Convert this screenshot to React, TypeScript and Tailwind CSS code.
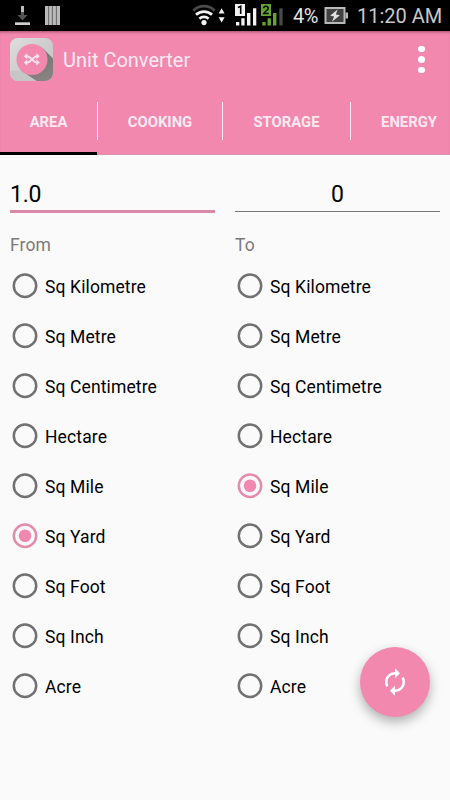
import React, { useState } from "react";
import { MdAutorenew } from "react-icons/md";

interface UnitColumnProps {
  label: string;
  selected: string;
  setSelected: (unit: string) => void;
}

const tabs = [
  { name: "AREA", className: "w-[97px]" },
  { name: "COOKING", className: "w-[125px]" },
  { name: "STORAGE", className: "w-[128px]" },
  { name: "ENERGY", className: "w-[117px]" },
];

const units = [
  "Sq Kilometre",
  "Sq Metre",
  "Sq Centimetre",
  "Hectare",
  "Sq Mile",
  "Sq Yard",
  "Sq Foot",
  "Sq Inch",
  "Acre",
];

function StatusBar() {
  return (
    <div className="flex h-[31px] bg-black text-[20px] leading-[32px] text-[#c8c8c8]">
      <svg width="285" height="31" viewBox="0 0 285 31" className="shrink-0">
        {/* download */}
        <path d="M21 6h3v6h-3z" fill="#bdbdbd" />
        <path d="M21 12h3v3h3.5l-5 5.5-5-5.5H21z" fill="#555" />
        <path d="M15 22.3h15v2.7H15z" fill="#cfcfcf" />
        {/* bars */}
        <path d="M45 6h15v19H45z" fill="#b9b9b9" />
        <path d="M48.6 6v19M52.4 6v19M56.4 6v19" stroke="#5e5e5e" strokeWidth="0.9" />
        {/* wifi */}
        <g fill="none" stroke="#f2f2f2" strokeWidth="2.7">
          <path d="M193.3 10.6a15 15 0 0 1 21.4 0" stroke="#4a4a4a" />
          <path d="M196 14.8a11.5 11.5 0 0 1 16 0" />
          <path d="M199.4 18.8a6.7 6.7 0 0 1 9.2 0" />
        </g>
        <circle cx="204" cy="22.6" r="2.6" fill="#f2f2f2" />
        <path d="M218.6 13.5l3-5.2 3 5.2zM218.6 17.3l3 5.2 3-5.2z" fill="#f2f2f2" />
        {/* sim 1 */}
        <path d="M235 4h10v12h-10z" fill="#f2f2f2" />
        <path d="M238 7.5l2.7-1.2V14" fill="none" stroke="#000" strokeWidth="1.6" />
        <path
          d="M236 22h3.3v3.5H236zM241.3 18.3h3.3v7.2h-3.3zM247 13h3.4v12.5H247zM253 8.3h3.3v17.2H253z"
          fill="#f2f2f2"
        />
        {/* sim 2 */}
        <path d="M261 4h10v12h-10z" fill="#64a62b" />
        <path
          d="M263.6 8.2c.2-2.6 4.8-2.5 4.7.1 0 1.7-3.4 3.1-4.6 5.2h5"
          fill="none"
          stroke="#000"
          strokeWidth="1.5"
        />
        <path
          d="M262.3 22h3.3v3.5h-3.3zM267.6 18.3h3.3v7.2h-3.3zM273 13h3.4v12.5H273z"
          fill="#64a62b"
        />
        <path d="M279.3 8.3h3.3v17.2h-3.3z" fill="#494949" />
      </svg>
      <p className="ml-[8px] w-[31px] tracking-[-0.5px] text-[#e4e4e4]">4%</p>
      <svg width="25" height="31" viewBox="0 0 25 31" className="shrink-0">
        <path d="M1.5 8h19v15h-19z" fill="#414141" stroke="#b8b8b8" strokeWidth="2" />
        <path d="M21.5 12.5H24v6h-2.5z" fill="#b8b8b8" />
        <path d="M13.5 9.5l-7.3 6.2 3.9.7-2.2 5.4 8-6.6-4-.8z" fill="#e0e0e0" />
      </svg>
      <p className="ml-[8px] whitespace-nowrap">11:20 AM</p>
    </div>
  );
}

function AppLogo() {
  return (
    <svg width="43" height="43" viewBox="0 0 43 43">
      <defs>
        <linearGradient id="tile" x1="0" y1="0" x2="1" y2="1">
          <stop offset="0" stopColor="#dedede" />
          <stop offset="1" stopColor="#bdbdbd" />
        </linearGradient>
        <linearGradient id="shade" x1="0" y1="0" x2="0.4" y2="1">
          <stop offset="0" stopColor="#6f6f6f" />
          <stop offset="1" stopColor="#8e8888" />
        </linearGradient>
        <clipPath id="tileClip">
          <rect width="43" height="43" rx="8" />
        </clipPath>
      </defs>
      <g clipPath="url(#tileClip)">
        <rect width="43" height="43" fill="url(#tile)" />
        <path d="M33 10.5L55 32.5 43 54 11 32.5z" fill="url(#shade)" />
        <path d="M11 32.5L22 43.5H0V33z" fill="#c6c6c6" />
      </g>
      <circle cx="22" cy="21.5" r="15.5" fill="#f288ae" />
      <g fill="none" stroke="#fbe3ec" strokeWidth="1.9">
        <path d="M15 18.2h2c4 0 6 6.4 10 6.4h1" />
        <path d="M15 24.6h2c4 0 6-6.4 10-6.4h1" />
      </g>
      <path d="M26.4 15.2l3.4 3-3.4 3zM26.4 21.6l3.4 3-3.4 3z" fill="#fbe3ec" />
      <path d="M17.2 15.2l-3.4 3 3.4 3zM17.2 21.6l-3.4 3 3.4 3z" fill="#fbe3ec" />
    </svg>
  );
}

function Radio({ checked }: { checked: boolean }) {
  return (
    <svg width="26" height="26" viewBox="0 0 26 26" className="shrink-0">
      <circle
        cx="13"
        cy="12.7"
        r="11.2"
        fill="none"
        stroke={checked ? "#e58cad" : "#717171"}
        strokeWidth="2.5"
      />
      {checked && <circle cx="13" cy="12.7" r="6.3" fill="#f288ae" />}
    </svg>
  );
}

function UnitColumn({ label, selected, setSelected }: UnitColumnProps) {
  return (
    <div className="w-[205px]">
      <p className="h-[48px] pt-[20px] text-[17.5px] leading-[24px] tracking-[0.1px] text-[#7b7b7b]">
        {label}
      </p>
      {units.map((unit) => (
        <button
          key={unit}
          type="button"
          onClick={() => setSelected(unit)}
          className="flex h-[50px] w-full items-center pl-[2px] text-left"
        >
          <Radio checked={selected === unit} />
          <span className="ml-[7px] pt-[2px] text-[17.5px] leading-[24px] tracking-[0.12px] text-black">
            {unit}
          </span>
        </button>
      ))}
    </div>
  );
}

export default function App() {
  const [activeTab, setActiveTab] = useState("AREA");
  const [from, setFrom] = useState("Sq Yard");
  const [to, setTo] = useState("Sq Mile");

  return (
    <div className="relative h-[800px] w-[450px] overflow-hidden bg-[#fafafa] font-['Roboto',sans-serif]">
      <StatusBar />

      <header className="h-[124px] bg-[#f288ae] shadow-[inset_0_3px_3px_-2px_rgba(80,20,40,0.5)]">
        <div className="flex h-[57px] items-center pl-[10px]">
          <AppLogo />
          <h1 className="ml-[10px] text-[20px] leading-[24px] text-[#fdeaf1]">
            Unit Converter
          </h1>
          <button
            type="button"
            aria-label="Menu"
            className="mr-[25px] ml-auto flex flex-col gap-[4px]"
          >
            <span className="size-[6.6px] rounded-full bg-white" />
            <span className="size-[6.6px] rounded-full bg-white" />
            <span className="size-[6.6px] rounded-full bg-white" />
          </button>
        </div>
        <nav className="flex h-[67px] overflow-hidden shadow-[inset_0_-1px_0_#d995ad]">
          {tabs.map((tab, i) => (
            <button
              key={tab.name}
              type="button"
              onClick={() => setActiveTab(tab.name)}
              className={`flex h-[67px] shrink-0 flex-col ${tab.className}`}
            >
              <span className="mt-[14px] flex h-[38px] w-full items-center">
                {i > 0 && <span className="h-full w-px bg-[#fff0f5]" />}
                <span className="flex-1 pt-px text-center text-[14.8px] leading-[20px] font-bold text-[#fdeaf1]">
                  {tab.name}
                </span>
              </span>
              {activeTab === tab.name && (
                <span className="mt-auto h-[3px] w-full bg-black" />
              )}
            </button>
          ))}
        </nav>
      </header>

      <main className="px-[10px]">
        <div className="flex gap-[20px]">
          <div className="h-[58px] w-[205px] border-b-[3px] border-[#d889a8] pt-[26px] text-[23px] leading-[28px] tracking-[-0.3px] text-black">
            1.0
          </div>
          <div className="h-[57px] w-[205px] border-b border-[#777] pt-[26px] text-center text-[23px] leading-[28px] text-black">
            0
          </div>
        </div>
        <div className="flex gap-[20px]">
          <UnitColumn label="From" selected={from} setSelected={setFrom} />
          <UnitColumn label="To" selected={to} setSelected={setTo} />
        </div>
      </main>

      <button
        type="button"
        aria-label="Convert"
        className="absolute top-[647px] left-[360px] grid size-[70px] place-items-center rounded-full bg-[#f288ae] text-white shadow-[0_5px_12px_rgba(0,0,0,0.3)]"
      >
        <MdAutorenew size={30} />
      </button>
    </div>
  );
}
